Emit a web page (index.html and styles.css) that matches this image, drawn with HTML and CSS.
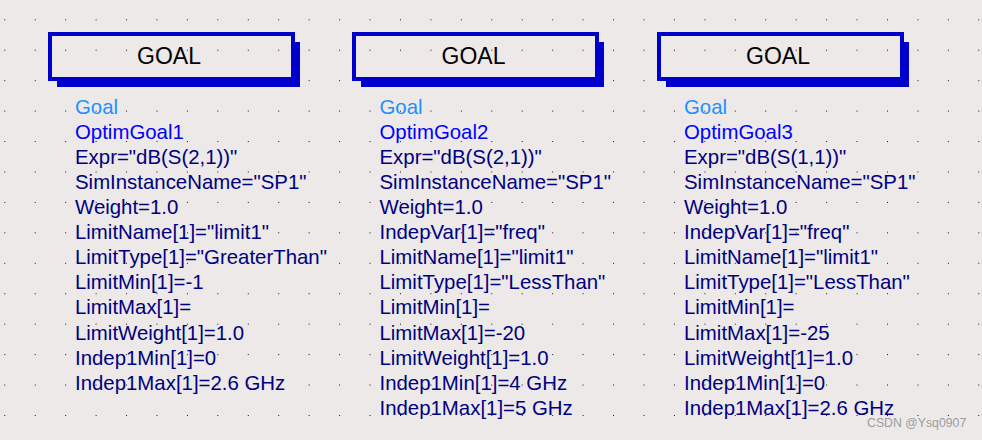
FILE: index.html
```html
<!DOCTYPE html>
<html lang="en">
<head>
<meta charset="utf-8">
<title>Optim Goals</title>
<link rel="stylesheet" href="styles.css">
</head>
<body>
<div class="canvas">
  <div class="goal">
    <div class="goal-box">GOAL</div>
    <div class="params">
      <div class="p-type">Goal</div>
      <div class="p-name">OptimGoal1</div>
      <div>Expr="dB(S(2,1))"</div>
      <div>SimInstanceName="SP1"</div>
      <div>Weight=1.0</div>
      <div>LimitName[1]="limit1"</div>
      <div>LimitType[1]="GreaterThan"</div>
      <div>LimitMin[1]=-1</div>
      <div>LimitMax[1]=</div>
      <div>LimitWeight[1]=1.0</div>
      <div>Indep1Min[1]=0</div>
      <div>Indep1Max[1]=2.6 GHz</div>
    </div>
  </div>
  <div class="goal">
    <div class="goal-box">GOAL</div>
    <div class="params">
      <div class="p-type">Goal</div>
      <div class="p-name">OptimGoal2</div>
      <div>Expr="dB(S(2,1))"</div>
      <div>SimInstanceName="SP1"</div>
      <div>Weight=1.0</div>
      <div>IndepVar[1]="freq"</div>
      <div>LimitName[1]="limit1"</div>
      <div>LimitType[1]="LessThan"</div>
      <div>LimitMin[1]=</div>
      <div>LimitMax[1]=-20</div>
      <div>LimitWeight[1]=1.0</div>
      <div>Indep1Min[1]=4 GHz</div>
      <div>Indep1Max[1]=5 GHz</div>
    </div>
  </div>
  <div class="goal">
    <div class="goal-box">GOAL</div>
    <div class="params">
      <div class="p-type">Goal</div>
      <div class="p-name">OptimGoal3</div>
      <div>Expr="dB(S(1,1))"</div>
      <div>SimInstanceName="SP1"</div>
      <div>Weight=1.0</div>
      <div>IndepVar[1]="freq"</div>
      <div>LimitName[1]="limit1"</div>
      <div>LimitType[1]="LessThan"</div>
      <div>LimitMin[1]=</div>
      <div>LimitMax[1]=-25</div>
      <div>LimitWeight[1]=1.0</div>
      <div>Indep1Min[1]=0</div>
      <div>Indep1Max[1]=2.6 GHz</div>
    </div>
  </div>
</div>
<div class="watermark">CSDN @Ysq0907</div>
</body>
</html>
```

FILE: styles.css
```css
html, body {
  margin: 0;
  padding: 0;
}

body {
  position: relative;
  width: 982px;
  height: 440px;
  overflow: hidden;
  background-color: #ece9e8;
  background-image: conic-gradient(at 1px 1px, transparent 270deg, #111 0);
  background-size: 30.45px 30.45px;
  background-position: 4.3px 19.3px;
  font-family: "Liberation Sans", Arial, sans-serif;
}

.canvas {
  display: flex;
  gap: 57.5px;
  padding: 32px 0 0 47.5px;
}

.goal {
  width: 247px;
  flex: none;
}

.goal-box {
  box-sizing: border-box;
  width: 247px;
  height: 49px;
  padding-right: 4px;
  border: 4px solid #0000cc;
  box-shadow: 7px 8px 0 -2px #0000cc;
  display: flex;
  align-items: center;
  justify-content: center;
  font-size: 23px;
  color: #000;
}

.params {
  margin: 13.8px 0 0 27.5px;
  font-size: 20.4px;
  line-height: 25.08px;
  color: #000080;
  white-space: nowrap;
}

.p-type {
  color: #1e90ff;
}

.p-name {
  color: #0000ff;
}

.watermark {
  position: absolute;
  left: 867px;
  top: 416.7px;
  font-size: 12.3px;
  line-height: 1;
  color: #9c9c9c;
  white-space: nowrap;
}
```
